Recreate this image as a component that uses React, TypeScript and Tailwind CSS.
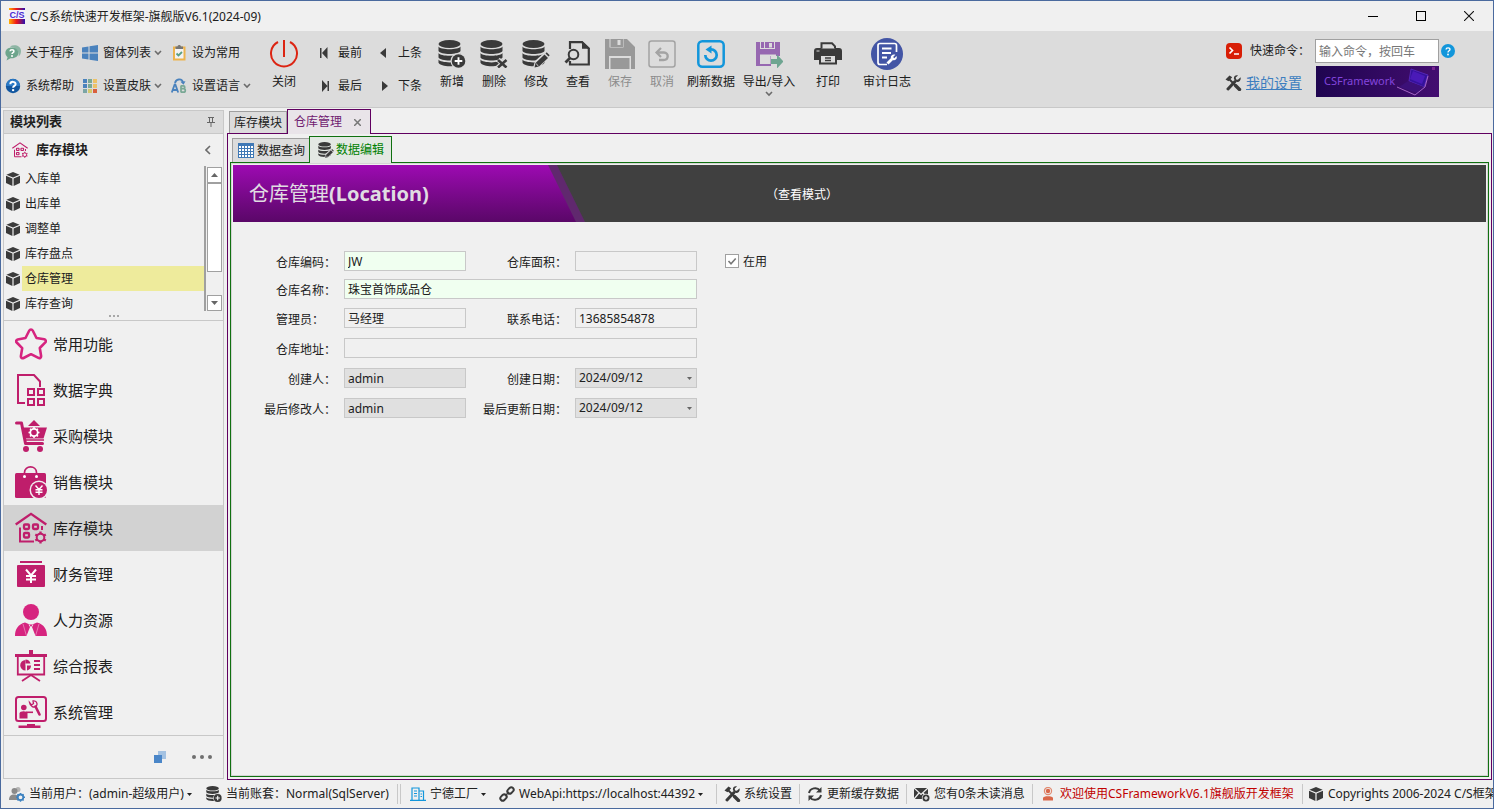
import React from 'react';
import clsx from 'clsx';

type IconProps = { className?: string };

const dark = '#3a3a3a';
const pink = '#bf1e6b';

/* ---------- small shared glyphs ---------- */

function ChevronDown({ className }: IconProps) {
  return (
    <svg width="8" height="8" viewBox="0 0 8 8" className={className} fill="none" stroke="#6b6b6b" strokeWidth="1.6">
      <path d="M1 2l3 3 3-3" />
    </svg>
  );
}

function Triangle({ className, small }: IconProps & { small?: boolean }) {
  return (
    <svg width={small ? 5 : 7} height={small ? 3 : 4} viewBox="0 0 7 4" className={className} preserveAspectRatio="none">
      <path d="M0 0h7L3.5 4z" fill="currentColor" />
    </svg>
  );
}

function CubeIcon({ size = 14 }: { size?: number }) {
  return (
    <svg width={size} height={size} viewBox="0 0 14 14" className="shrink-0">
      <path d="M7 0l6.6 2.8L7 5.6.4 2.8z" fill={dark} />
      <path d="M0 3.8l6.4 2.7V14L0 11z" fill={dark} />
      <path d="M14 3.8L7.6 6.5V14L14 11z" fill={dark} />
    </svg>
  );
}

function ToolsIcon() {
  return (
    <svg width="17" height="16" viewBox="0 0 17 16" className="shrink-0">
      <path d="M3 3l10.5 10.5" stroke={dark} strokeWidth="2" />
      <path d="M10.5 10.5l4 4" stroke={dark} strokeWidth="3.4" strokeLinecap="round" />
      <path d="M3 14l7-7.5" stroke={dark} strokeWidth="3" strokeLinecap="round" />
      <path d="M15.5 2.2l-2.6 2.6-1.8-.4-.4-1.8L13 .4C10.500-.4 8.400 1.500 9 4.200l2.800 2.800c2.700.4 4.600-2 3.700-4.800z" fill={dark} />
      <path d="M.5 4.500L4.500.6l2.700 1.700-3.700 4z" fill={dark} />
    </svg>
  );
}

function DatabaseIcon({ size = 28, children }: { size?: number; children?: React.ReactNode }) {
  return (
    <svg width={size} height={size} viewBox="0 0 28 28" className="shrink-0">
      <ellipse cx="11.500" cy="4" rx="11" ry="4" fill={dark} />
      <path d="M.5 6.500c2 3.600 20 3.600 22 0v4.600c-2 4-20 4-22 0z" fill={dark} />
      <path d="M.5 13c2 3.700 20 3.700 22 0v4.600c-2 4-20 4-22 0z" fill={dark} />
      <path d="M.5 19.600c2 3.700 20 3.700 22 0v3.200c-2 4.600-20 4.600-22 0z" fill={dark} />
      {children}
    </svg>
  );
}

function PlusBadge() {
  return (
    <>
      <circle cx="20.500" cy="21" r="8" fill="#dcdcdc" />
      <circle cx="20.500" cy="21" r="6.800" fill={dark} />
      <path d="M20.500 17.200v7.600M16.700 21h7.600" stroke="#fff" strokeWidth="1.900" />
    </>
  );
}

function PencilBadge() {
  return (
    <>
      <path d="M11 28l2-7 10-9 5 4-10 11z" fill="#dcdcdc" />
      <path d="M12.500 27.500l1-4.500 9-8.500 3.500 3.500-9 8.600z" fill={dark} />
      <path d="M23.500 13.500l1.200-1.200 3 3-1.200 1.200z" fill={dark} />
      <path d="M14.200 23.800l2.300 2.300" stroke="#dcdcdc" />
    </>
  );
}

/* ---------- ribbon icons ---------- */

const chatIcon = (
  <svg width="16" height="16" viewBox="0 0 16 16">
    <path d="M5 1.500C9-1 16 .5 16 6c0 3-1.500 5-2.500 5.500C14.500 6 11 2.500 5 1.500z" fill="#8db5a4" />
    <path d="M6.800 2.500C3 2.500.4 4.700.4 7.800c0 2 .9 3.500 2.200 4.400L1.500 15.500l4-2.300c4.500.6 7.900-1.800 7.900-5.400 0-3.100-2.800-5.300-6.600-5.300z" fill="#6da58c" />
    <path d="M5 6.300c.2-2 3.900-2 3.900.1 0 1.300-1.900 1.300-1.900 2.700" stroke="#fff" strokeWidth="1.500" fill="none" />
    <circle cx="7" cy="11" r="1" fill="#fff" />
  </svg>
);

const helpIcon = (
  <svg width="16" height="16" viewBox="0 0 16 16">
    <circle cx="8" cy="8" r="7.200" fill="#1257a0" />
    <path d="M1 8a7 7 0 0 1 14 0z" fill="#2b7ac6" />
    <path d="M5.300 6.200c.2-3.200 5.500-3 5.300 0-.1 1.700-2.500 1.700-2.500 3.600" stroke="#fff" strokeWidth="2" fill="none" />
    <circle cx="8.100" cy="12.100" r="1.200" fill="#fff" />
  </svg>
);

const windowsIcon = (
  <svg width="16" height="16" viewBox="0 0 16 16" fill="#4a82bd">
    <path d="M0 2.500L6.500 1.500v6H0zM7.500 1.300L16 0v7.500H7.500zM0 8.500h6.500v6L0 13.500zM7.500 8.500H16V16l-8.500-1.300z" />
  </svg>
);

const skinIcon = (
  <svg width="16" height="16" viewBox="0 0 16 16">
    <path d="M1 1h4v4H1z" fill="#4a82bd" />
    <path d="M6 1h4v4H6z" fill="#79a895" />
    <path d="M11 1h4v4h-4z" fill="#edc267" />
    <path d="M1 6h4v4H1z" fill="#4a82bd" />
    <path d="M6 6h4v4H6z" fill="#79a895" />
    <path d="M11 6h4v4h-4z" fill="#edc267" />
    <path d="M1 11h4v4H1z" fill="#7ba5a5" />
    <path d="M6 11h4v4H6z" fill="#d3c96d" />
    <path d="M11 11h4v4h-4z" fill="#d9603d" />
  </svg>
);

const clipboardIcon = (
  <svg width="16" height="16" viewBox="0 0 16 16" fill="none">
    <path d="M3 2.500v12h10.500v-12z" fill="#f3f3f3" stroke="#edb34c" strokeWidth="2" />
    <path d="M4.500 1.500h2c.3-2 3.200-2 3.500 0h2v2.500H4.500z" fill="#767676" />
    <path d="M5.500 8.500l2 2L11 7" stroke="#5a9e83" strokeWidth="1.800" />
  </svg>
);

const languageIcon = (
  <svg width="16" height="16" viewBox="0 0 16 16" fill="none">
    <path d="M.8 14.500L3.500 7h1l2.700 7.500M2 12h4" stroke="#4a82bd" strokeWidth="1.800" />
    <path d="M10 7.500v7M10 7.800h2.300c2 0 2 2.900 0 2.900H10h2.500c2.400 0 2.400 3.500 0 3.500H10" stroke="#79a895" strokeWidth="1.700" />
    <path d="M4 5.500C4.500.5 11 0 12 4.500" stroke="#4a82bd" strokeWidth="1.900" />
    <path d="M9.500 3.800l5-.5-2 3.500z" fill="#4a82bd" />
  </svg>
);

const powerIcon = (
  <svg width="30" height="30" viewBox="0 0 30 30" fill="none" stroke="#dc2412" strokeWidth="2">
    <path d="M9 3a13 13 0 1 0 12 0M15 1v17" />
  </svg>
);

const searchDocIcon = (
  <svg width="28" height="28" viewBox="0 0 28 28" fill="none" stroke={dark} strokeWidth="2.200">
    <path d="M6 9V2.200h12l6.800 6.300v16H6V21" />
    <path d="M18 1l8 7.800h-8z" fill={dark} stroke="none" />
    <circle cx="9.500" cy="14.500" r="4.800" fill="#dcdcdc" strokeWidth="2" />
    <path d="M6 18l-4.500 4.500" strokeWidth="2.800" />
  </svg>
);

const saveIcon = (
  <svg width="30" height="32" viewBox="0 0 30 32">
    <path d="M0 1h22l8 8v22H0z" fill="#999" />
    <path d="M4.500 0v9.500h14V0" fill="#dcdcdc" />
    <path d="M5.500 1h12.500v8H5.500z" fill="#999" />
    <path d="M12.500 2h3v5h-3z" fill="#dcdcdc" />
    <path d="M4 18h22v13H4z" fill="#dcdcdc" />
    <path d="M5.500 20h19v11h-19z" fill="#999" />
  </svg>
);

const cancelIcon = (
  <svg width="28" height="28" viewBox="0 0 28 28" fill="none" stroke="#a3a3a3">
    <rect x="1" y="1" width="26" height="26" rx="2.500" strokeWidth="1.500" />
    <path d="M10 12.500h6c5 0 5 7.500-.5 7.500H11" strokeWidth="2.400" />
    <path d="M13 8l-4.500 4.500L13 17" strokeWidth="2.200" />
  </svg>
);

const refreshDataIcon = (
  <svg width="28" height="28" viewBox="0 0 28 28" fill="none" stroke="#1296db">
    <rect x="1.300" y="1.300" width="25.400" height="25.400" rx="4" strokeWidth="2.500" />
    <path d="M14 9.300a5.700 5.700 0 1 1-5.700 5.700" strokeWidth="2.700" />
    <path d="M8.500 9.500l6-4v8z" fill="#1296db" stroke="none" />
  </svg>
);

const exportIcon = (
  <svg width="28" height="28" viewBox="0 0 28 28">
    <path d="M1 2h4v7h15V2h5v14h-9v8H1z" fill="#9768b1" />
    <path d="M6 2h3v6H6zM10 2h9v6h-9z" fill="#9768b1" />
    <path d="M14 3h3v4.500h-3z" fill="#dcdcdc" />
    <path d="M5 14.500h16V16h-5.500v8H5z" fill="#dcdcdc" />
    <path d="M1 24h15v2H1z" fill="#9768b1" />
    <path d="M16 19h6v-4.500l6.500 7-6.500 7V24h-6z" fill="#6ea591" />
  </svg>
);

const printerIcon = (
  <svg width="28" height="28" viewBox="0 0 28 28">
    <path d="M3 8h22c2 0 3 1 3 3v9h-5v-3H5v3H0v-9c0-2 1-3 3-3z" fill={dark} />
    <path d="M7.500 8.500V3.300h10.500l3 3v2.200" fill="#dcdcdc" stroke={dark} strokeWidth="2" />
    <path d="M6 15h16v8.500H6z" fill="#dcdcdc" stroke={dark} strokeWidth="2" />
    <path d="M11 18h6M11 20.500h6" stroke={dark} strokeWidth="1.500" />
    <path d="M2.500 11h3" stroke="#dcdcdc" />
  </svg>
);

const auditIcon = (
  <svg width="32" height="32" viewBox="0 0 32 32" fill="none" stroke="#fff">
    <circle cx="16" cy="16" r="16" fill="#4355a5" stroke="none" />
    <path d="M16 26.500H9c-1.300 0-2-.7-2-2v-17c0-1.300.7-2 2-2h14.500c1.200 0 2 .7 2 2V14" strokeWidth="1.700" />
    <path d="M11 10.500h9.500M11 15h9M11 19.500h5" strokeWidth="2" />
    <path d="M16.500 25.500l4.500-4.500" strokeWidth="2.800" />
    <path d="M25.500 18l-2.200 2.200-1.200-1.200L24.300 16.800c-2.300-1-4.800.7-4.500 3 .2 2 2.200 3 4 2.300 1.800-.6 2.500-2.400 1.700-4.100z" fill="#fff" stroke="none" />
  </svg>
);

/* ---------- sidebar icons ---------- */

function HouseIcon({ size = 32 }: { size?: number }) {
  return (
    <svg width={size} height={size} viewBox="0 0 32 32" fill="none" stroke={pink} strokeWidth="2.300">
      <path d="M.7 12.500L16 1.800l15.300 10.700" />
      <path d="M5 15.500v14h14M27 14v4" strokeWidth="2" />
      <rect x="9" y="12.500" width="5" height="4.500" rx="1" />
      <rect x="18" y="12.500" width="5" height="4.500" rx="1" />
      <rect x="9" y="21" width="5" height="4.500" rx="1" />
      <circle cx="25.500" cy="25.500" r="3.800" strokeWidth="2" />
      <path d="M25.500 19.500v2M25.500 29.500v2M20.300 22.500l1.800 1M29 27.500l1.800 1M20.300 28.500l1.800-1M29 23.500l1.800-1" />
    </svg>
  );
}

const starIcon = (
  <svg width="32" height="32" viewBox="0 0 32 32" fill="none" stroke="#d6247f" strokeWidth="2.600" strokeLinejoin="round">
    <path d="M14.300 2.500c.7-1.300 2.700-1.300 3.400 0l3.800 7.500 7.800 1.300c1.500.3 2 2 1 3.100L24.800 20l1.300 8c.2 1.600-1.300 2.600-2.700 1.900L16 26.200 8.600 30c-1.400.7-2.900-.4-2.700-1.900l1.300-8-5.500-5.600c-1-1.100-.5-2.800 1-3.100L10.500 10z" />
  </svg>
);

const dictIcon = (
  <svg width="32" height="32" viewBox="0 0 32 32" fill="none" stroke={pink} strokeWidth="2">
    <path d="M10 29H3V1h16l6 6.500V13" />
    <path d="M13 15h6v6h-6zM23 15h6v6h-6zM13 25h6v6h-6zM23 25h6v6h-6z" />
  </svg>
);

const cartIcon = (
  <svg width="32" height="32" viewBox="0 0 32 32">
    <path d="M1.500 3h5l4 20.500h17" fill="none" stroke={pink} strokeWidth="3" strokeLinecap="round" strokeLinejoin="round" />
    <path d="M8 7.500h24l-3.500 11H10z" fill={pink} />
    <path d="M13 6l6-6 6 6z" fill={pink} />
    <path d="M9.500 20h19.500" stroke={pink} strokeWidth="1.500" />
    <circle cx="19" cy="12.500" r="3.700" fill="none" stroke="#fff" strokeWidth="1.800" />
    <path d="M19 7v2M19 16v2M13.500 12.500h2M22.500 12.500h2M15 8.700l1.400 1.400M21.600 15l1.400 1.400M23 8.700l-1.400 1.400M16.400 15L15 16.400" stroke="#fff" strokeWidth="1.500" />
    <circle cx="11" cy="29" r="3" fill={pink} />
    <circle cx="25" cy="29" r="3" fill={pink} />
  </svg>
);

const bagIcon = (
  <svg width="32" height="32" viewBox="0 0 32 32">
    <rect x="0" y="7" width="31" height="25" rx="1.500" fill={pink} />
    <path d="M9.500 10V6.500c0-7.500 12-7.500 12 0V10" fill="none" stroke={pink} strokeWidth="1.700" />
    <circle cx="9.500" cy="10.500" r="1.500" fill="#fff" />
    <circle cx="21.500" cy="10.500" r="1.500" fill="#fff" />
    <circle cx="24" cy="24" r="9.500" fill="#f0f0f0" />
    <circle cx="24" cy="24" r="8" fill={pink} />
    <path d="M20.500 19.500l3.500 4 3.500-4M24 23.500V29M20.500 23.800h7M20.500 26.300h7" stroke="#fff" strokeWidth="1.400" fill="none" />
  </svg>
);

const financeIcon = (
  <svg width="32" height="32" viewBox="0 0 32 32">
    <rect x="5" y="3" width="22" height="2" fill={pink} />
    <rect x="2" y="7" width="28" height="22" rx="1" fill={pink} />
    <path d="M11 11.500l5 6 5-6M16 17.500V25M11 18h10M11 21.500h10" stroke="#fff" strokeWidth="2" fill="none" />
  </svg>
);

const personIcon = (
  <svg width="32" height="32" viewBox="0 0 32 32">
    <circle cx="16" cy="8" r="8" fill="#d6247f" />
    <path d="M0 32c0-7 3-11.500 10-13.500L16 21l6-2.500c7 2 10 6.500 10 13.500z" fill="#d6247f" />
    <path d="M11.500 32L15 23l-1.500-2.500h5L17 23l3.500 9z" fill="#f0f0f0" />
    <path d="M14.500 20.500h3l-1 2h-1z" fill="#d6247f" />
    <path d="M8 20l3.500 12M24 20l-3.500 12" stroke="#e98bbb" strokeWidth=".8" />
  </svg>
);

const reportIcon = (
  <svg width="32" height="32" viewBox="0 0 32 32" fill="none" stroke={pink}>
    <path d="M0 5.500h32" strokeWidth="3" />
    <path d="M16 0v5" strokeWidth="4" />
    <path d="M2.800 6v18.500h26.400V6" strokeWidth="1.800" />
    <path d="M16 25l-9 6M16 25l9 6" strokeWidth="1.800" />
    <path d="M10.500 10a5.300 5.300 0 1 0 0 10.600v-5.300h-.2z" fill={pink} stroke="none" />
    <path d="M10.500 9.500a5.500 5.500 0 0 1 5 4h-5zM12 15.500h4a5 5 0 0 1-4 5z" fill={pink} stroke="none" />
    <path d="M19 11h6M19 15h6M19 19h6" strokeWidth="1.800" />
  </svg>
);

const systemIcon = (
  <svg width="32" height="32" viewBox="0 0 32 32" fill="none" stroke={pink}>
    <rect x="1" y="1" width="30" height="24" rx="2.500" strokeWidth="2" />
    <circle cx="8.800" cy="11.500" r="2.800" fill={pink} stroke="none" />
    <path d="M4.500 22.500v-5c0-3 8-3 8 0v5z" fill={pink} stroke="none" />
    <path d="M11 16.300h7" strokeWidth="1.600" />
    <path d="M20.500 10.500l4 8" strokeWidth="2.600" strokeLinecap="round" />
    <path d="M14.500 6.500l2 2.500 2-1.500-.5-2.500c3-.5 5 2 3.500 5-2.500 2.200-6.500.5-7-3.500z" strokeWidth="1.300" />
    <path d="M12 28h8v1.500h5.500V32h-22v-2.500H12z" fill={pink} stroke="none" />
  </svg>
);

/* ---------- status bar icons ---------- */

const usersIcon = (
  <svg width="16" height="16" viewBox="0 0 16 16">
    <circle cx="9" cy="3.500" r="2.500" fill="#b5b5b5" />
    <circle cx="5.500" cy="5" r="3" fill="#8a8a8a" />
    <path d="M0 14c0-4 2-5.500 5-5.500 2 0 3 .5 4 1.500v4z" fill="#8a8a8a" />
    <circle cx="11.500" cy="11.300" r="2.800" fill="none" stroke="#3f83c0" strokeWidth="1.800" />
    <path d="M11.500 7v2M11.500 13.500v2.300M7.200 11.300h2M14 11.300h2M8.500 8.300l1.400 1.400M13.200 13l1.400 1.400M14.600 8.300l-1.400 1.400M9.900 13l-1.400 1.400" stroke="#3f83c0" strokeWidth="1.400" />
  </svg>
);

const buildingIcon = (
  <svg width="16" height="14" viewBox="0 0 16 14" fill="none" stroke="#1296db" strokeWidth="1.200">
    <path d="M0 13.300h16M2 13V1h7v12M9 4h4.500v9M4 4h3M4 6.500h3M4 9h3M10.500 7h1.500M10.500 9.500h1.500" />
  </svg>
);

const linkIcon = (
  <svg width="16" height="16" viewBox="0 0 16 16" fill="none" stroke={dark} strokeWidth="1.900">
    <rect x="-3.500" y="-2.400" width="7" height="4.800" rx="2.400" transform="translate(11.500 4.500) rotate(-45)" />
    <rect x="-3.500" y="-2.400" width="7" height="4.800" rx="2.400" transform="translate(4.500 11.500) rotate(-45)" />
    <path d="M6 10l4-4" strokeWidth="1.500" />
  </svg>
);

const reloadIcon = (
  <svg width="16" height="14" viewBox="0 0 16 14" fill="none" stroke={dark} strokeWidth="2">
    <path d="M2 6c1-5 8-6.500 11-2.500M14 8c-1 5-8 6.500-11 2.500" />
    <path d="M14.500 0v5.500H9zM1.500 14V8.500H7z" fill={dark} stroke="none" />
  </svg>
);

const mailIcon = (
  <svg width="16" height="15" viewBox="0 0 16 15" fill="none">
    <path d="M0 1h14v11H0z" fill={dark} />
    <path d="M0 1l7 6.500L14 1M0 12l5-6M14 12L9 6" stroke="#f0f0f0" strokeWidth="1.200" />
    <circle cx="12" cy="11" r="4.200" fill="#f0f0f0" />
    <circle cx="12" cy="11" r="3.500" fill={dark} />
    <path d="M12 9v4M10 11h4" stroke="#fff" strokeWidth="1.100" />
  </svg>
);

const agentIcon = (
  <svg width="12" height="14" viewBox="0 0 12 14">
    <circle cx="6" cy="4" r="3.600" fill="none" stroke="#e08a70" strokeWidth="1.200" />
    <circle cx="6" cy="4" r="2.200" fill="#d9674a" />
    <path d="M1 13.500V11c0-2.500 10-2.500 10 0v2.500z" fill="#d9674a" />
  </svg>
);

/* ---------- building blocks ---------- */

function SmallButton({ icon, label, caret }: { icon: React.ReactNode; label: string; caret?: boolean }) {
  return (
    <button className="flex h-8 items-center whitespace-nowrap">
      <span className="mr-[5px] flex w-4 justify-center">{icon}</span>
      {label}
      {caret && <ChevronDown className="ml-[3px]" />}
    </button>
  );
}

function NavButton({ path, label }: { path: string; label: string }) {
  return (
    <button className="flex h-8 items-center gap-[9px] whitespace-nowrap">
      <svg width="9" height="12" viewBox="0 0 9 12" fill={dark}>
        <path d={path} />
      </svg>
      {label}
    </button>
  );
}

interface BigButtonProps {
  icon: React.ReactNode;
  label: string;
  width: string;
  disabled?: boolean;
  caret?: boolean;
}

function BigButton({ icon, label, width, disabled, caret }: BigButtonProps) {
  return (
    <button
      disabled={disabled}
      className={clsx('flex flex-col items-center whitespace-nowrap', width, disabled && 'text-[#8c8c8c]')}
    >
      <span className="flex h-8 items-center justify-center">{icon}</span>
      <span className="mt-1 leading-4">{label}</span>
      {caret && <ChevronDown />}
    </button>
  );
}

const bigButtons: BigButtonProps[] = [
  { label: '新增', width: 'w-[42px]', icon: <DatabaseIcon><PlusBadge /></DatabaseIcon> },
  {
    label: '删除',
    width: 'w-[42px]',
    icon: (
      <DatabaseIcon>
        <path d="M18 19.500l8.500 8M26.500 19.500l-8.500 8" stroke="#dcdcdc" strokeWidth="5" />
        <path d="M18 20l8.500 7.500M26.500 20l-8.500 7.500" stroke={dark} strokeWidth="2.600" />
      </DatabaseIcon>
    ),
  },
  { label: '修改', width: 'w-[42px]', icon: <DatabaseIcon><PencilBadge /></DatabaseIcon> },
  { label: '查看', width: 'w-[42px]', icon: searchDocIcon },
  { label: '保存', width: 'w-[42px]', icon: saveIcon, disabled: true },
  { label: '取消', width: 'w-[42px]', icon: cancelIcon, disabled: true },
  { label: '刷新数据', width: 'w-14', icon: refreshDataIcon },
  { label: '导出/导入', width: 'w-[60px]', icon: exportIcon, caret: true },
  { label: '打印', width: 'w-[58px]', icon: printerIcon },
  { label: '审计日志', width: 'w-[60px]', icon: auditIcon },
];

function TitleBar() {
  return (
    <header className="flex h-[30px] shrink-0 items-center pl-2">
      <svg width="16" height="16" viewBox="0 0 16 16">
        <defs>
          <linearGradient id="logo" x1="0" x2="1">
            <stop offset="0" stopColor="#ffb400" />
            <stop offset=".45" stopColor="#f01818" />
            <stop offset="1" stopColor="#2a10b0" />
          </linearGradient>
        </defs>
        <path d="M0 0h16v16H0z" fill="#f4f0fb" />
        <path d="M0 0h16v2H0zM0 11h16v5H0z" fill="url(#logo)" />
        <text x="8" y="9.500" textAnchor="middle" fontSize="9" fontWeight="700" fill="#4a2ad0" fontFamily="Liberation Sans">
          C/S
        </text>
      </svg>
      <h1 className="ml-[5px] pt-px">C/S系统快速开发框架-旗舰版V6.1(2024-09)</h1>
      <div className="ml-auto flex">
        <button aria-label="最小化" className="flex h-[30px] w-12 items-center justify-center">
          <span className="h-px w-2.5 bg-black" />
        </button>
        <button aria-label="最大化" className="flex h-[30px] w-12 items-center justify-center">
          <span className="h-2.5 w-2.5 border border-black" />
        </button>
        <button aria-label="关闭窗口" className="flex h-[30px] w-12 items-center justify-center">
          <svg width="10" height="10" viewBox="0 0 10 10" stroke="#111" strokeWidth="1.100">
            <path d="M0 0l10 10M10 0L0 10" />
          </svg>
        </button>
      </div>
    </header>
  );
}

function Ribbon() {
  return (
    <div className="flex h-[77px] shrink-0 border-b border-[#c8c8c8] bg-[#dcdcdc] pl-1">
      <div className="grid grid-cols-[77px_89px_88px] content-start gap-y-px pt-1.5">
        <SmallButton icon={chatIcon} label="关于程序" />
        <SmallButton icon={windowsIcon} label="窗体列表" caret />
        <SmallButton icon={clipboardIcon} label="设为常用" />
        <SmallButton icon={helpIcon} label="系统帮助" />
        <SmallButton icon={skinIcon} label="设置皮肤" caret />
        <SmallButton icon={languageIcon} label="设置语言" caret />
      </div>
      <div className="flex pt-[7px]">
        <BigButton icon={powerIcon} label="关闭" width="w-[50px]" />
      </div>
      <div className="ml-[11px] grid grid-cols-[60px_51px] content-start gap-y-px pt-1.5">
        <NavButton path="M0 1h1.500v10H0zM7.500 0v12L2 6z" label="最前" />
        <NavButton path="M6 1v10L0 6z" label="上条" />
        <NavButton path="M2 0v12l5.500-6zM7.500 1H9v10H7.500z" label="最后" />
        <NavButton path="M2 1v10l6-5z" label="下条" />
      </div>
      <div className="flex pt-[7px]">
        {bigButtons.map((b) => (
          <BigButton key={b.label} {...b} />
        ))}
      </div>
      <div className="ml-auto grid grid-cols-[90px_140px] content-start pt-2 pr-[38px]">
        <label htmlFor="command" className="flex h-6 items-center whitespace-nowrap">
          <svg width="16" height="16" viewBox="0 0 16 16" className="mr-2 ml-px">
            <rect width="16" height="16" rx="4" fill="#d81e06" />
            <path d="M3.500 4.500l3 3-3 3M8 11h5" stroke="#fff" strokeWidth="1.700" fill="none" />
          </svg>
          快速命令：
        </label>
        <div className="flex items-center gap-0.5">
          <input
            id="command"
            placeholder="输入命令，按回车"
            className="h-6 w-[124px] border border-[#a0a0a0] bg-white px-[3px] placeholder:text-[#777]"
          />
          <svg width="14" height="14" viewBox="0 0 14 14">
            <circle cx="7" cy="7" r="7" fill="#1296db" />
            <path d="M5 5.500c.1-2.200 4-2.200 4 0 0 1.400-2 1.300-2 3" stroke="#fff" strokeWidth="1.300" fill="none" />
            <circle cx="7" cy="10.500" r=".9" fill="#fff" />
          </svg>
        </div>
        <div className="mt-1 flex h-8 items-center gap-1">
          <ToolsIcon />
          <a href="#settings" className="text-sm whitespace-nowrap text-[#3d7ebf] underline">
            我的设置
          </a>
        </div>
        <div className="mt-[3px] ml-px flex h-[31px] w-[123px] items-center bg-linear-to-r from-[#1f0550] to-[#430d70] pl-2 text-[11px] text-[#8345dc]">
          CSFramework
          <svg width="42" height="31" viewBox="0 0 42 31" className="ml-auto">
            <path d="M14 3l17 6-4 12-15-6z" fill="#34129a" stroke="#5c2bc4" strokeWidth=".8" />
            <path d="M16 5l12 5-3 8-12-5z" fill="#4a1ab8" />
            <path d="M11 15l16 6-7 6L2 21z" fill="#3c1078" />
            <path d="M0 21l18 8 10-8 3-11" stroke="#b06fd0" strokeWidth=".9" fill="none" />
            <path d="M35 1h3v3h-3z" fill="#7a2590" />
          </svg>
        </div>
      </div>
    </div>
  );
}

const forms = ['入库单', '出库单', '调整单', '库存盘点', '仓库管理', '库存查询'];

const modules = [
  { label: '常用功能', icon: starIcon },
  { label: '数据字典', icon: dictIcon },
  { label: '采购模块', icon: cartIcon },
  { label: '销售模块', icon: bagIcon },
  { label: '库存模块', icon: <HouseIcon /> },
  { label: '财务管理', icon: financeIcon },
  { label: '人力资源', icon: personIcon },
  { label: '综合报表', icon: reportIcon },
  { label: '系统管理', icon: systemIcon },
];

function Sidebar() {
  return (
    <aside className="flex min-h-0 w-[221px] shrink-0 flex-col border border-[#c8c8c8]">
      <div className="flex h-[23px] shrink-0 items-center justify-between border-b border-[#c8c8c8] bg-[#dcdcdc] pr-2 pl-1.5">
        <h2 className="text-[13px] font-bold">模块列表</h2>
        <svg width="8" height="10" viewBox="0 0 8 10" fill="none" stroke="#666" aria-label="固定">
          <path d="M1 .5h6M2.500 1v4.500M5.500 1v4.500M0 5.500h8M4 6v4" />
        </svg>
      </div>
      <div className="flex h-8 shrink-0 items-center pr-3 pl-2">
        <HouseIcon size={16} />
        <h3 className="ml-2 text-[13px] font-bold">库存模块</h3>
        <svg width="6" height="10" viewBox="0 0 6 10" className="ml-auto" fill="none" stroke="#6b6b6b" strokeWidth="1.600">
          <path d="M5 1L1 5l4 4" />
        </svg>
      </div>
      <div className="flex min-h-0 flex-1">
        <ul className="min-w-0 flex-1 overflow-hidden border-r-2 border-[#a0a0a0]">
          {forms.map((f) => (
            <li key={f}>
              <button className="flex h-[25px] w-full items-center pl-0.5">
                <CubeIcon />
                <span
                  className={clsx('ml-0.5 flex h-full flex-1 items-center pl-[3px]', f === '仓库管理' && 'bg-[#eeeb9c]')}
                >
                  {f}
                </span>
              </button>
            </li>
          ))}
        </ul>
        <div className="mx-px flex w-[15px] flex-col pt-px text-[#666]">
          <button aria-label="向上" className="flex h-4 items-center justify-center border border-[#a0a0a0] bg-white">
            <Triangle className="rotate-180" />
          </button>
          <div className="h-[89px] border border-[#a0a0a0] bg-white" />
          <button
            aria-label="向下"
            className="mt-auto flex h-4 items-center justify-center border border-[#a0a0a0] bg-white"
          >
            <Triangle />
          </button>
        </div>
      </div>
      <div className="flex h-[10px] shrink-0 items-center justify-center gap-0.5 border-b border-[#c8c8c8]">
        <i className="h-0.5 w-0.5 bg-[#a8a8a8]" />
        <i className="h-0.5 w-0.5 bg-[#a8a8a8]" />
        <i className="h-0.5 w-0.5 bg-[#a8a8a8]" />
      </div>
      <nav className="shrink-0">
        {modules.map((m) => (
          <button
            key={m.label}
            className={clsx(
              'flex h-[46px] w-full items-center gap-1.5 pl-[11px] text-[15px]',
              m.label === '库存模块' && 'bg-[#d2d2d2]',
            )}
          >
            {m.icon}
            {m.label}
          </button>
        ))}
      </nav>
      <div className="flex h-[43px] shrink-0 items-center justify-end border-t border-[#c8c8c8] pr-[11px]">
        <button aria-label="切换窗口">
          <svg width="12" height="12" viewBox="0 0 12 12">
            <path d="M4 0h8v8H8V4H4z" fill="#a4c2e2" />
            <path d="M0 4h8v8H0z" fill="#4a86c8" />
          </svg>
        </button>
        <button aria-label="更多" className="ml-[26px] flex gap-1">
          <i className="h-1 w-1 rounded-full bg-[#6f6f6f]" />
          <i className="h-1 w-1 rounded-full bg-[#6f6f6f]" />
          <i className="h-1 w-1 rounded-full bg-[#6f6f6f]" />
        </button>
      </div>
    </aside>
  );
}

function FieldLabel({ htmlFor, children, className }: { htmlFor: string; children: string; className?: string }) {
  return (
    <label htmlFor={htmlFor} className={clsx('flex h-6 items-center justify-end pr-2 whitespace-nowrap', className)}>
      {children}
    </label>
  );
}

function TextField({ id, value, className }: { id: string; value: string; className?: string }) {
  return (
    <input
      id={id}
      readOnly
      defaultValue={value}
      className={clsx('h-5 w-full min-w-0 border border-[#c8c8c8] px-[3px]', className)}
    />
  );
}

function DateField({ id, value }: { id: string; value: string }) {
  return (
    <div className="relative h-5">
      <select
        id={id}
        defaultValue={value}
        className="block h-5 w-full appearance-none border border-[#c8c8c8] bg-[#e0e0e0] px-[3px] leading-[18px]"
      >
        <option>{value}</option>
      </select>
      <Triangle small className="pointer-events-none absolute top-[9px] right-[5px] text-[#666]" />
    </div>
  );
}

function LocationForm() {
  return (
    <form className="grid grid-cols-[80px_122px_109px_122px_auto] grid-rows-[28px_29px_30px_30px_30px_20px] justify-start pt-[29px] pl-[31px]">
      <FieldLabel htmlFor="code">仓库编码：</FieldLabel>
      <TextField id="code" value="JW" className="bg-[#f0fff0]" />
      <FieldLabel htmlFor="area">仓库面积：</FieldLabel>
      <TextField id="area" value="" />
      <label className="ml-7 flex h-5 items-center gap-1 whitespace-nowrap">
        <span className="relative h-3.5 w-3.5">
          <input type="checkbox" defaultChecked className="block h-3.5 w-3.5 appearance-none border border-[#a0a0a0] bg-white" />
          <svg width="14" height="14" viewBox="0 0 14 14" className="pointer-events-none absolute inset-0" fill="none">
            <path d="M3.500 7l2.500 2.700 4.700-5.200" stroke="#777" strokeWidth="1.600" />
          </svg>
        </span>
        <span className="pt-0.5">在用</span>
      </label>

      <FieldLabel htmlFor="name">仓库名称：</FieldLabel>
      <div className="col-span-3">
        <TextField id="name" value="珠宝首饰成品仓" className="bg-[#f0fff0]" />
      </div>
      <span />

      <FieldLabel htmlFor="keeper" className="mr-3">管理员：</FieldLabel>
      <TextField id="keeper" value="马经理" />
      <FieldLabel htmlFor="phone">联系电话：</FieldLabel>
      <TextField id="phone" value="13685854878" />
      <span />

      <FieldLabel htmlFor="address">仓库地址：</FieldLabel>
      <div className="col-span-3">
        <TextField id="address" value="" />
      </div>
      <span />

      <FieldLabel htmlFor="creator">创建人：</FieldLabel>
      <TextField id="creator" value="admin" className="bg-[#e0e0e0]" />
      <FieldLabel htmlFor="created">创建日期：</FieldLabel>
      <DateField id="created" value="2024/09/12" />
      <span />

      <FieldLabel htmlFor="editor">最后修改人：</FieldLabel>
      <TextField id="editor" value="admin" className="bg-[#e0e0e0]" />
      <FieldLabel htmlFor="updated">最后更新日期：</FieldLabel>
      <DateField id="updated" value="2024/09/12" />
    </form>
  );
}

function Workspace() {
  return (
    <main className="flex min-w-0 flex-1 flex-col">
      <div className="flex items-end pl-0.5">
        <button className="h-[22px] w-[58px] border border-b-0 border-[#a0a0a0] bg-[#dcdcdc] pt-px whitespace-nowrap">
          库存模块
        </button>
        <button className="relative -mb-px flex h-[25px] w-[84px] items-center border border-b-0 border-[#600060] bg-[#e9e4e9] pl-1.5 whitespace-nowrap text-[#702070]">
          仓库管理
          <svg width="7" height="7" viewBox="0 0 7 7" className="ml-3" stroke="#777" strokeWidth="1.500">
            <path d="M0 0l7 7M7 0L0 7" />
          </svg>
        </button>
      </div>
      <div className="flex flex-1 flex-col border border-[#600060] p-0.5">
        <div className="flex items-end pl-0.5">
          <button className="flex h-6 w-[77px] items-center gap-[3px] border border-r-0 border-b-0 border-[#a0a0a0] bg-[#dcdcdc] pl-[5px] whitespace-nowrap">
            <svg width="16" height="15" viewBox="0 0 16 15">
              <path d="M0 0h16v15H0z" fill="#3f78b5" />
              <path
                d="M1 3h2v2H1zM4 3h2v2H4zM7 3h2v2H7zM10 3h2v2h-2zM13 3h2v2h-2zM1 6h2v2H1zM4 6h2v2H4zM7 6h2v2H7zM10 6h2v2h-2zM13 6h2v2h-2zM1 9h2v2H1zM4 9h2v2H4zM7 9h2v2H7zM10 9h2v2h-2zM13 9h2v2h-2zM1 12h2v2H1zM4 12h2v2H4zM7 12h2v2H7zM10 12h2v2h-2zM13 12h2v2h-2z"
                fill="#fff"
              />
            </svg>
            数据查询
          </button>
          <button className="relative -mb-px flex h-[27px] w-[83px] items-center gap-0.5 border border-b-0 border-[#107010] bg-[#e3e8e3] pl-2 whitespace-nowrap text-[#008000]">
            <DatabaseIcon size={16}>
              <PencilBadge />
            </DatabaseIcon>
            数据编辑
          </button>
        </div>
        <div className="flex flex-1 flex-col border border-[#107010]">
          <div className="flex-1 border border-[#d4d4d4] p-px">
            <div className="relative flex h-[57px] items-center bg-[#404040]">
              <div className="absolute inset-y-0 left-0 w-[352px] bg-[#60286e] [clip-path:polygon(0_0,324px_0,100%_100%,0_100%)]" />
              <div className="absolute inset-y-0 left-0 w-[343px] bg-linear-to-b from-[#9d0ab2] to-[#5a0768] [clip-path:polygon(0_0,315px_0,100%_100%,0_100%)]" />
              <h2 className="relative pl-4 text-xl whitespace-nowrap text-[#e0dce2]">
                仓库管理<b>(Location)</b>
              </h2>
              <span className="absolute left-[533px] pt-0.5 whitespace-nowrap text-white">（查看模式）</span>
            </div>
            <LocationForm />
          </div>
        </div>
      </div>
    </main>
  );
}

function StatusItem({ icon, children, caret, className }: { icon: React.ReactNode; children: string; caret?: boolean; className?: string }) {
  return (
    <button className={clsx('flex shrink-0 items-center whitespace-nowrap', className)}>
      <span className="mr-1 flex w-4 justify-center">{icon}</span>
      {children}
      {caret && <Triangle small className="ml-[3px]" />}
    </button>
  );
}

function Divider() {
  return <span className="mr-[7px] h-5 w-px shrink-0 bg-[#c8c8c8]" />;
}

function StatusBar() {
  return (
    <footer className="flex h-7 shrink-0 items-center overflow-hidden pl-2">
      <StatusItem icon={usersIcon} caret className="w-[197px]">当前用户：(admin-超级用户)</StatusItem>
      <StatusItem icon={<DatabaseIcon size={16}><PlusBadge /></DatabaseIcon>} className="w-[191px]">
        当前账套：Normal(SqlServer)
      </StatusItem>
      <span className="mr-[9px] h-5 w-1 shrink-0 border-x border-[#c8c8c8]" />
      <StatusItem icon={buildingIcon} caret className="w-[89px]">宁德工厂</StatusItem>
      <StatusItem icon={linkIcon} caret className="w-[217px]">WebApi:https://localhost:44392</StatusItem>
      <Divider />
      <StatusItem icon={<ToolsIcon />} className="w-[75px]">系统设置</StatusItem>
      <Divider />
      <StatusItem icon={reloadIcon} className="w-[99px]">更新缓存数据</StatusItem>
      <Divider />
      <StatusItem icon={mailIcon} className="w-[118px]">您有0条未读消息</StatusItem>
      <Divider />
      <StatusItem icon={agentIcon} className="w-[262px] text-[#c00000]">欢迎使用CSFrameworkV6.1旗舰版开发框架</StatusItem>
      <span className="mr-[5px] h-5 w-px shrink-0 bg-[#c8c8c8]" />
      <StatusItem icon={<CubeIcon />}>Copyrights 2006-2024 C/S框架</StatusItem>
    </footer>
  );
}

export default function App() {
  return (
    <div className="flex h-screen flex-col border border-[#4a6a9e] bg-[#f0f0f0] font-['Noto_Sans','Noto_Sans_CJK_SC',sans-serif] text-xs text-[#202020]">
      <TitleBar />
      <Ribbon />
      <div className="flex min-h-0 flex-1 gap-[3px] pr-px pl-0.5">
        <div className="flex pt-0.5 pb-px">
          <Sidebar />
        </div>
        <div className="flex min-w-0 flex-1 pt-px">
          <Workspace />
        </div>
      </div>
      <StatusBar />
    </div>
  );
}
